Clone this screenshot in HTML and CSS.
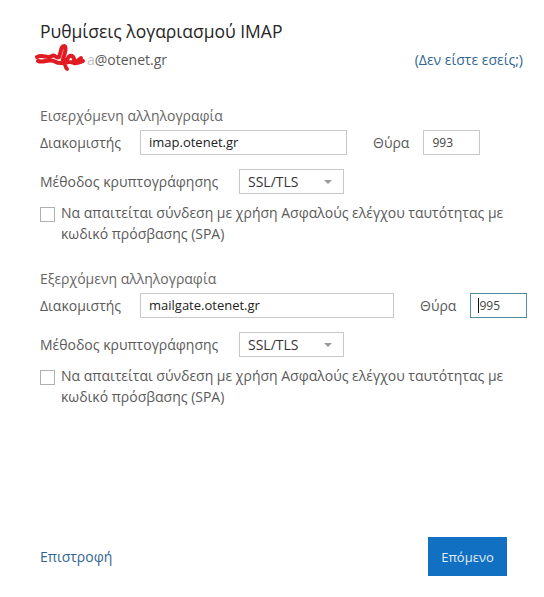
FILE: index.html
```html
<!DOCTYPE html>
<html lang="el">
<head>
  <meta charset="UTF-8">
  <meta name="viewport" content="width=device-width, initial-scale=1.0">
  <title>Ρυθμίσεις λογαριασμού IMAP</title>
  <link rel="stylesheet" href="styles.css">
</head>
<body>
  <div class="dialog">
    <h1 class="title">Ρυθμίσεις λογαριασμού IMAP</h1>
    <div class="account">
      <span class="email"><span class="scribble"><svg width="52" height="30" viewBox="0 0 52 30"><path d="M3 15 C9 12 13 17 18 14 C21 12 22 17 25 15 C27 10 27 4 30 4 C33 4 31 12 29 17 C28 22 31 24 33 18 C35 12 39 13 40 17 C41 21 44 19 47 16 M4 19 C10 21 16 16 22 20 C27 23 34 18 40 21 C43 22 46 20 49 19 M30 17 C31 24 32 27 33 27" fill="none" stroke="#e11b22" stroke-width="4" stroke-linecap="round" stroke-linejoin="round"/></svg></span><span class="muted">a</span>@otenet.gr</span>
      <a class="link" href="#">(Δεν είστε εσείς;)</a>
    </div>

    <section class="group incoming">
      <div class="group-title">Εισερχόμενη αλληλογραφία</div>
      <div class="row">
        <label class="label">Διακομιστής</label>
        <div class="field server">imap.otenet.gr</div>
        <label class="label port-label">Θύρα</label>
        <div class="field port">993</div>
      </div>
      <div class="row">
        <label class="label">Μέθοδος κρυπτογράφησης</label>
        <div class="select">SSL/TLS <span class="caret"></span></div>
      </div>
      <div class="check-row">
        <span class="checkbox"></span>
        <span class="check-text">Να απαιτείται σύνδεση με χρήση Ασφαλούς ελέγχου ταυτότητας με κωδικό πρόσβασης (SPA)</span>
      </div>
    </section>

    <section class="group outgoing">
      <div class="group-title">Εξερχόμενη αλληλογραφία</div>
      <div class="row">
        <label class="label">Διακομιστής</label>
        <div class="field server wide">mailgate.otenet.gr</div>
        <label class="label port-label">Θύρα</label>
        <div class="field port focused"><span class="cursor"></span>995</div>
      </div>
      <div class="row">
        <label class="label">Μέθοδος κρυπτογράφησης</label>
        <div class="select">SSL/TLS <span class="caret"></span></div>
      </div>
      <div class="check-row">
        <span class="checkbox"></span>
        <span class="check-text">Να απαιτείται σύνδεση με χρήση Ασφαλούς ελέγχου ταυτότητας με κωδικό πρόσβασης (SPA)</span>
      </div>
    </section>

    <div class="footer">
      <a class="back" href="#">Επιστροφή</a>
      <button class="next">Επόμενο</button>
    </div>
  </div>
</body>
</html>
```

FILE: styles.css
```css
body {
  margin: 0;
  background: #fff;
  font-family: "Open Sans", "Noto Sans", sans-serif;
  color: #5a5a5a;
}
.dialog {
  width: 544px;
  height: 597px;
  box-sizing: border-box;
  padding: 19px 17px 0 40px;
  display: flex;
  flex-direction: column;
}
.title {
  margin: 0;
  font-size: 17.5px;
  font-weight: 400;
  color: #262626;
  line-height: 24px;
}
.account {
  display: flex;
  justify-content: space-between;
  align-items: center;
  margin-top: 7px;
  font-size: 14px;
  line-height: 20px;
}
.email {
  position: relative;
  color: #5a5a5a;
  padding-left: 2px;
}
.muted {
  color: #c4c4c4;
  margin-left: 45px;
}
.scribble {
  position: absolute;
  left: -6px;
  top: -8px;
}
.link {
  color: #2f6590;
  text-decoration: none;
  margin-right: 4px;
}
.group {
  margin-top: 36px;
}
.outgoing {
  margin-top: 25px;
}
.group-title {
  font-size: 14px;
  line-height: 20px;
  color: #666;
}
.row {
  display: flex;
  align-items: center;
  margin-top: 4px;
  height: 25px;
}
.row + .row {
  margin-top: 14px;
}
.label {
  font-size: 14px;
  color: #5a5a5a;
  width: 100px;
  white-space: nowrap;
}
.row .label:first-child {
  flex: none;
}
.field {
  box-sizing: border-box;
  flex: none;
  height: 25px;
  border: 1px solid #c8c8c8;
  font-size: 13px;
  color: #222;
  padding: 0 8px;
  line-height: 23px;
}
.server {
  width: 207px;
}
.server.wide {
  width: 254px;
}
.port-label {
  width: auto;
  margin-left: 26px;
  margin-right: 14px;
}
.port {
  width: 57px;
  font-size: 12px;
  color: #444;
}
.focused {
  border-color: #4f8ea0;
  position: relative;
}
.cursor {
  position: absolute;
  left: 7px;
  top: 4px;
  width: 1px;
  height: 15px;
  background: #111;
}
.select {
  box-sizing: border-box;
  margin-left: 99px;
  width: 105px;
  height: 25px;
  border: 1px solid #c8c8c8;
  font-size: 14px;
  color: #333;
  padding: 0 8px;
  line-height: 23px;
  display: flex;
  justify-content: space-between;
  align-items: center;
}
.caret {
  width: 0;
  height: 0;
  border-left: 4px solid transparent;
  border-right: 4px solid transparent;
  border-top: 4px solid #999;
  margin-right: 3px;
}
.check-row {
  display: flex;
  align-items: flex-start;
  margin-top: 12px;
}
.checkbox {
  flex: none;
  box-sizing: border-box;
  width: 15px;
  height: 15px;
  border: 1px solid #b0b0b0;
  margin-right: 6px;
  margin-top: 1px;
}
.check-text {
  font-size: 14px;
  line-height: 21px;
  color: #5a5a5a;
  margin-top: -4px;
  width: 450px;
}
.footer {
  margin-top: auto;
  margin-bottom: 21px;
  display: flex;
  justify-content: space-between;
  align-items: center;
}
.back {
  color: #2f6590;
  text-decoration: none;
  font-size: 14px;
}
.next {
  width: 79px;
  height: 39px;
  margin-right: 20px;
  background: #1170c1;
  color: #e3edf7;
  border: none;
  font-family: inherit;
  font-size: 13px;
}
```
